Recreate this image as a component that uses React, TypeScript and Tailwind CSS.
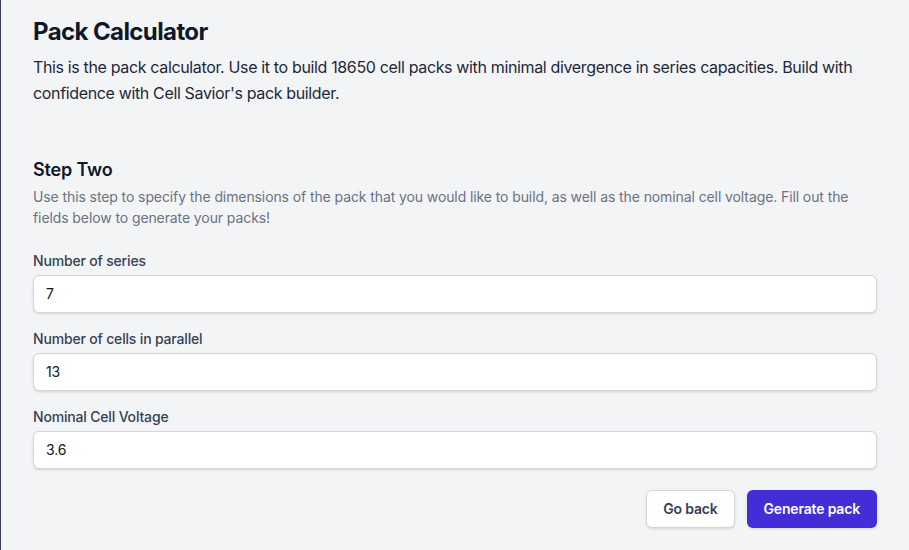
export default function App() {
  const fields = [
    { label: "Number of series", value: "7" },
    { label: "Number of cells in parallel", value: "13" },
    { label: "Nominal Cell Voltage", value: "3.6" },
  ];

  return (
    <div
      className="min-h-[550px] bg-gray-100 border-l border-gray-700 px-8 pt-4 pb-6 tracking-[-0.011em]"
      style={{ fontFamily: "Inter, 'Noto Sans', sans-serif" }}
    >
      <h1 className="text-2xl font-bold tracking-tight text-gray-900">Pack Calculator</h1>
      <p className="mt-1.5 text-base leading-relaxed tracking-[-0.022em] text-gray-800">
        This is the pack calculator. Use it to build 18650 cell packs with minimal divergence in series capacities. Build with
        confidence with Cell Savior's pack builder.
      </p>

      <section className="mt-[50px]">
        <h2 className="text-lg font-semibold text-gray-900">Step Two</h2>
        <p className="mt-0.5 text-sm leading-[21px] tracking-[-0.007em] text-gray-500">
          Use this step to specify the dimensions of the pack that you would like to build, as well as the nominal cell voltage. Fill out the
          fields below to generate your packs!
        </p>

        <div className="mt-[23px] flex flex-col gap-4">
          {fields.map((f) => (
            <div key={f.label}>
              <label className="block text-sm font-medium text-gray-700">{f.label}</label>
              <input
                type="text"
                defaultValue={f.value}
                className="mt-1 block w-full rounded-md border border-gray-300 bg-white px-3 py-2 text-sm text-gray-900 shadow-sm outline-none"
              />
            </div>
          ))}
        </div>

        <div className="mt-[21px] flex justify-end gap-3">
          <button className="rounded-md border border-gray-300 bg-white px-4 py-2 text-sm font-semibold text-gray-700 shadow-sm">
            Go back
          </button>
          <button className="rounded-md border border-transparent bg-indigo-700 px-4 py-2 text-sm font-semibold text-white shadow-sm">
            Generate pack
          </button>
        </div>
      </section>
    </div>
  );
}
